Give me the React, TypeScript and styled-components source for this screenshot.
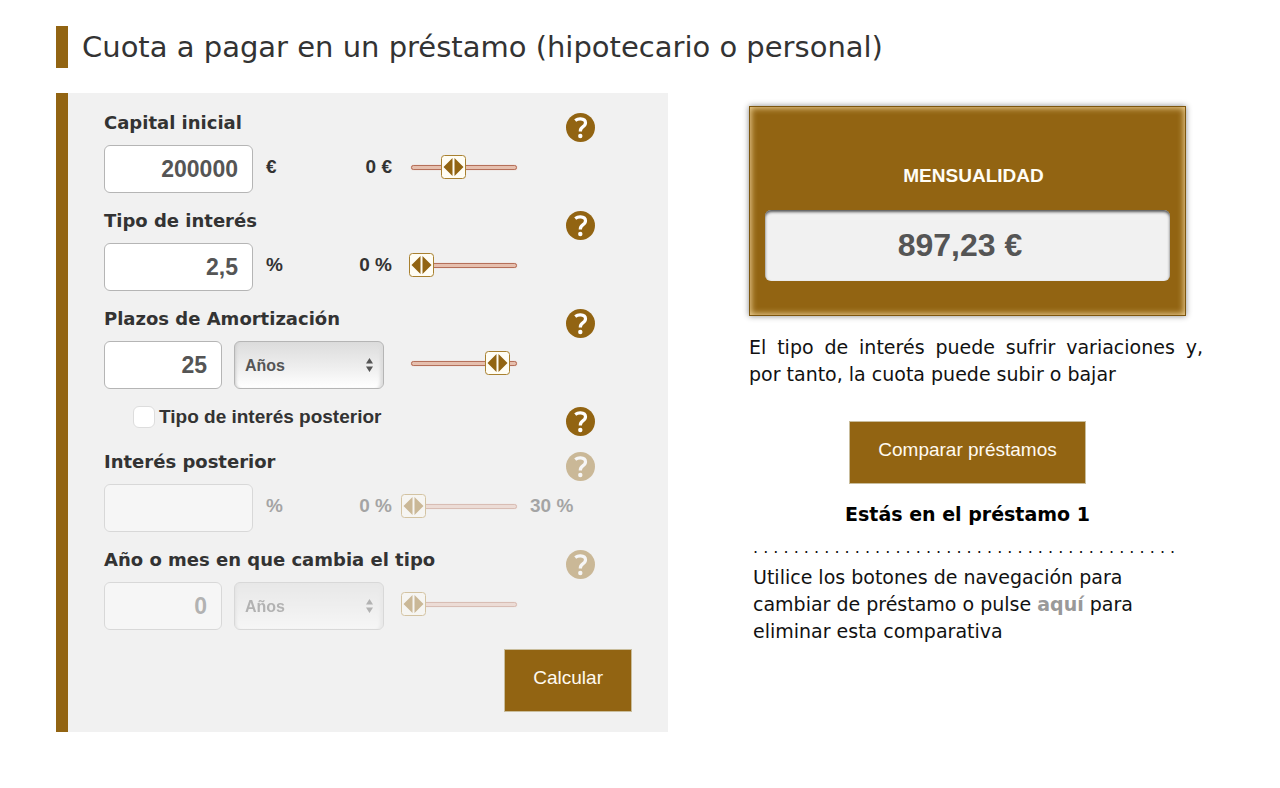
import React, { useState } from 'react';
import styled, { createGlobalStyle } from 'styled-components';

const brand = '#926412';
const verdana = "Verdana, 'DejaVu Sans', sans-serif";
const arial = "'Liberation Sans', Arial, sans-serif";

const GlobalStyle = createGlobalStyle`
  *, *::before, *::after { box-sizing: border-box; }
  body {
    margin: 0;
    background: #fff;
    color: #111;
    font-family: ${verdana};
    font-size: 19px;
  }
  button, input, select { font-family: ${arial}; margin: 0; }
`;

const Page = styled.main`
  padding: 26px 56px 56px;
`;

const Title = styled.h1`
  margin: 0 0 25px;
  padding-left: 14px;
  border-left: 12px solid ${brand};
  color: #333;
  font-size: 29px;
  font-weight: 400;
  line-height: 42px;
`;

const Columns = styled.div`
  display: flex;
  align-items: flex-start;
  gap: 81px;
`;

const Panel = styled.form`
  flex: 0 1 612px;
  padding: 18px 36px 20px;
  border-left: 12px solid ${brand};
  background: #f1f1f1;
`;

const FieldRow = styled.div`
  display: grid;
  grid-template-columns: minmax(0, 1fr) 66px;
  align-items: start;
  margin-bottom: 16px;
`;

const FieldLabel = styled.label`
  display: block;
  margin-bottom: 10px;
  color: #333;
  font-size: 18px;
  font-weight: 700;
  line-height: 24px;
`;

const Controls = styled.div<{ $off?: boolean }>`
  display: flex;
  align-items: flex-start;
  height: 48px;
  opacity: ${(p) => (p.$off ? 0.4 : 1)};
`;

const Entry = styled.div`
  display: flex;
  flex: none;
  width: 288px;
  margin-right: 9px;
`;

const NumberBox = styled.input<{ $narrow?: boolean }>`
  width: ${(p) => (p.$narrow ? 118 : 149)}px;
  height: 48px;
  padding: 0 14px;
  border: 1px solid #b5b5b5;
  border-radius: 6px;
  background: #fff;
  color: #555;
  font-size: 23px;
  font-weight: 700;
  text-align: right;
`;

const Amount = styled.span`
  color: #333;
  font-family: ${arial};
  font-size: 19px;
  font-weight: 700;
  line-height: 44px;
  white-space: nowrap;
`;

const Unit = styled(Amount)`
  margin-left: 13px;
`;

const Minimum = styled(Amount)`
  margin-left: auto;
`;

const SelectWrap = styled.span`
  display: grid;
  grid-template-columns: 1fr 24px;
  align-items: center;
  width: 150px;
  margin-left: 12px;
  svg { grid-area: 1 / 2; pointer-events: none; }
`;

const UnitSelect = styled.select`
  grid-area: 1 / 1 / 2 / 3;
  width: 100%;
  height: 48px;
  padding: 0 10px;
  appearance: none;
  border: 1px solid #b5b5b5;
  border-radius: 6px;
  background: linear-gradient(#dcdcdc, #f0f0f0 60%, #fff);
  box-shadow: inset -5px 0 3px -2px #ddd, inset 3px 0 3px -2px #ccc;
  color: #555;
  font-size: 16px;
  font-weight: 700;
  opacity: 1;
`;

const SliderBox = styled.span`
  position: relative;
  display: grid;
  flex: none;
  align-items: center;
  width: 126px;
  height: 44px;
`;

const Rail = styled.span`
  grid-area: 1 / 1;
  height: 5px;
  margin: 0 10px;
  border: 1px solid #b5705a;
  border-radius: 3px;
  background: #e6bfae;
  box-shadow: 0 0 1px #d9a08c;
`;

const Range = styled.input`
  grid-area: 1 / 1;
  width: 100%;
  height: 24px;
  opacity: 0;
`;

const Thumb = styled.svg`
  position: absolute;
  top: 10px;
  pointer-events: none;
`;

const Maximum = styled(Amount)`
  margin-left: 3px;
`;

const HelpButton = styled.button<{ $off?: boolean }>`
  width: 29px;
  height: 29px;
  margin-top: 2px;
  padding: 0;
  border: 0;
  background: none;
  opacity: ${(p) => (p.$off ? 0.4 : 1)};
  svg { display: block; }
`;

const CheckRow = styled(FieldRow)`
  margin-bottom: 14px;
`;

const CheckLabel = styled.label`
  display: flex;
  align-items: center;
  gap: 4px;
  margin-left: 29px;
  color: #333;
  font-family: ${arial};
  font-size: 19px;
  font-weight: 700;
  line-height: 24px;
`;

const CheckBox = styled.input`
  width: 22px;
  height: 22px;
  appearance: none;
  border: 1px solid #ddd;
  border-radius: 6px;
  background: #fff;
`;

const Actions = styled.div`
  display: flex;
  justify-content: flex-end;
  padding-top: 3px;
`;

const ActionButton = styled.button`
  padding: 16px 28px 22px;
  border: 1px solid #c9bd9c;
  background: ${brand};
  color: #fffaf0;
  font-size: 19px;
  line-height: 23px;
`;

const Aside = styled.aside`
  flex: 0 1 454px;
  padding-top: 13px;
  line-height: 27px;
`;

const Centered = styled.div`
  display: flex;
  flex-direction: column;
  align-items: center;
  margin-right: 17px;
`;

const ResultCard = styled.section`
  margin-right: 17px;
  padding: 56px 15px 34px;
  border: 1px solid #7d560e;
  background: ${brand};
  box-shadow: 0 0 6px #888, inset 0 0 6px 1px #f0d49a;
`;

const ResultTitle = styled.h2`
  margin: 0 0 22px;
  padding-left: 12px;
  color: #fffdf5;
  font-family: ${arial};
  font-size: 19px;
  font-weight: 700;
  line-height: 25px;
  text-align: center;
`;

const ResultValue = styled.output`
  display: block;
  padding-right: 15px;
  border-radius: 6px;
  background: #f1f1f1;
  box-shadow: inset 0 2px 3px #555;
  color: #555;
  font-family: ${arial};
  font-size: 32px;
  font-weight: 700;
  line-height: 71px;
  text-align: center;
`;

const Notice = styled.p`
  margin: 18px 0 33px;
  text-align: justify;
`;

const Status = styled.p`
  margin: 17px 0 6px;
  color: #000;
  font-weight: 700;
`;

const Dots = styled.div`
  overflow: hidden;
  margin-left: 4px;
  font-size: 16px;
  white-space: nowrap;
`;

const Hint = styled.p`
  margin: 3px 17px 0 4px;
`;

const HereLink = styled.a`
  color: #999;
  font-weight: 700;
  text-decoration: none;
`;

function Help({ topic, off }: { topic: string; off?: boolean }) {
  return (
    <HelpButton type="button" aria-label={`Ayuda: ${topic}`} $off={off}>
      <svg width="29" height="29" viewBox="0 0 29 29" fill="none">
        <circle cx="14.5" cy="14.5" r="14.5" fill={brand} />
        <path
          d="M9.2 7.600c1.700-1.300 3.400-1.800 5.300-1.700 3 .1 5 1.600 5 3.900 0 1.900-1.100 3-2.700 4.100-1.600 1.100-2.500 2-2.500 4.500"
          stroke="#fff"
          strokeWidth="3.200"
        />
        <circle cx="14.300" cy="23" r="2.200" fill="#fff" />
      </svg>
    </HelpButton>
  );
}

interface SliderProps {
  name: string;
  start: number;
  max: number;
  step?: number;
  off?: boolean;
}

function Slider({ name, start, max, step = 1, off }: SliderProps) {
  const [value, setValue] = useState(start);
  return (
    <SliderBox>
      <Rail />
      <Range
        type="range"
        aria-label={name}
        min={0}
        max={max}
        step={step}
        value={value}
        disabled={off}
        onChange={(e) => setValue(Number(e.target.value))}
      />
      <Thumb
        width="25"
        height="24"
        viewBox="0 0 25 24"
        style={{ left: Math.round((value / max) * 101) }}
      >
        <rect x=".5" y=".5" width="24" height="23" rx="3" fill="#fffdf4" stroke="#a8802f" />
        <path d="M11.500 3v18L2.500 12zM13.500 3v18l9-9z" fill={brand} />
      </Thumb>
    </SliderBox>
  );
}

function Period({ name, off }: { name: string; off?: boolean }) {
  return (
    <SelectWrap>
      <UnitSelect aria-label={name} disabled={off}>
        <option>Años</option>
        <option>Meses</option>
      </UnitSelect>
      <svg width="18" height="16" viewBox="0 0 18 16" fill="#555">
        <path d="M6 6.500 9.500 1l3.500 5.500zM6 9.500l3.500 5.500L13 9.500z" />
      </svg>
    </SelectWrap>
  );
}

interface FieldProps extends Omit<SliderProps, 'name'> {
  id: string;
  label: string;
  text: string;
  unit?: string;
  top?: string;
}

function Field({ id, label, text, unit, top, start, max, step, off }: FieldProps) {
  return (
    <FieldRow>
      <div>
        <FieldLabel htmlFor={id}>{label}</FieldLabel>
        <Controls $off={off}>
          <Entry>
            <NumberBox id={id} defaultValue={text} disabled={off} $narrow={!unit} />
            {unit ? (
              <>
                <Unit>{unit}</Unit>
                <Minimum>0 {unit}</Minimum>
              </>
            ) : (
              <Period name={`${label}: unidad`} off={off} />
            )}
          </Entry>
          <Slider name={label} start={start} max={max} step={step} off={off} />
          {top && <Maximum>{top}</Maximum>}
        </Controls>
      </div>
      <Help topic={label} off={off} />
    </FieldRow>
  );
}

export default function App() {
  return (
    <>
      <GlobalStyle />
      <Page>
        <Title>Cuota a pagar en un préstamo (hipotecario o personal)</Title>
        <Columns>
          <Panel onSubmit={(e) => e.preventDefault()}>
            <Field id="capital" label="Capital inicial" text="200000" unit="€" start={200000} max={500000} step={1000} />
            <Field id="interes" label="Tipo de interés" text="2,5" unit="%" start={2.5} max={30} step={0.1} />
            <Field id="plazos" label="Plazos de Amortización" text="25" start={25} max={30} />
            <CheckRow>
              <CheckLabel>
                <CheckBox type="checkbox" />
                Tipo de interés posterior
              </CheckLabel>
              <Help topic="Tipo de interés posterior" />
            </CheckRow>
            <Field id="posterior" label="Interés posterior" text="" unit="%" top="30 %" start={0} max={30} off />
            <Field id="cambio" label="Año o mes en que cambia el tipo" text="0" start={0} max={30} off />
            <Actions>
              <ActionButton type="submit">Calcular</ActionButton>
            </Actions>
          </Panel>
          <Aside>
            <ResultCard>
              <ResultTitle>MENSUALIDAD</ResultTitle>
              <ResultValue>897,23 €</ResultValue>
            </ResultCard>
            <Notice>El tipo de interés puede sufrir variaciones y, por tanto, la cuota puede subir o bajar</Notice>
            <Centered>
              <ActionButton type="button">Comparar préstamos</ActionButton>
              <Status>Estás en el préstamo 1</Status>
            </Centered>
            <Dots aria-hidden="true">{Array(42).fill('.').join(' ')}</Dots>
            <Hint>
              Utilice los botones de navegación para cambiar de préstamo o pulse <HereLink href="#">aquí</HereLink> para
              eliminar esta comparativa
            </Hint>
          </Aside>
        </Columns>
      </Page>
    </>
  );
}
